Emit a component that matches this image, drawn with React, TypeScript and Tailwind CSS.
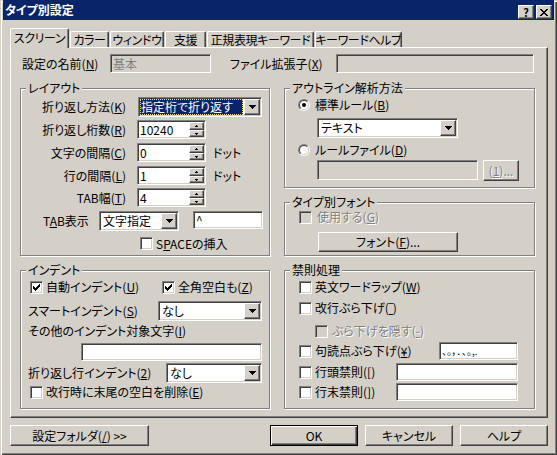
import type { ReactNode } from 'react';

const sunken =
  'border border-t-[#808080] border-l-[#808080] border-b-white border-r-white shadow-[inset_1px_1px_0_#404040,inset_-1px_-1px_0_#d4d0c8]';
const raised =
  'border border-t-white border-l-white border-b-[#404040] border-r-[#404040] shadow-[inset_-1px_-1px_0_#808080]';
const etched = 'border border-[#808080] shadow-[inset_1px_1px_0_#fff,1px_1px_0_#fff]';
const dim = 'text-[#808080] [text-shadow:1px_1px_0_#fff]';

const CHECK = ['......#', '.....##', '#...###', '##.###.', '#####..', '.###...', '..#....'];
const CLOSE = ['##....##', '.##..##.', '..####..', '...##...', '..####..', '.##..##.', '##....##'];
const ARROW = ['#######', '.#####.', '..###..', '...#...'];
const UP = ['.#.', '###'];
const DOWN = ['###', '.#.'];

function Pixels({ rows, color = '#000' }: { rows: string[]; color?: string }) {
  return (
    <svg width={rows[0].length} height={rows.length} shapeRendering="crispEdges" className="block">
      {rows.flatMap((r, y) =>
        r.split('').map((c, x) =>
          c === '#' ? <rect key={`${x}-${y}`} x={x} y={y} width={1} height={1} fill={color} /> : null,
        ),
      )}
    </svg>
  );
}

function Check({ checked, disabled }: { checked?: boolean; disabled?: boolean }) {
  return (
    <div
      className={`${sunken} flex h-[13px] w-[13px] shrink-0 items-center justify-center ${
        disabled ? 'bg-[#d4d0c8]' : 'bg-white'
      }`}
    >
      {checked && <Pixels rows={CHECK} />}
    </div>
  );
}

function Radio({ checked }: { checked?: boolean }) {
  return (
    <div className="flex h-[12px] w-[12px] shrink-0 items-center justify-center rounded-full border border-[#808080] border-b-white border-r-white">
      <div className="flex h-[10px] w-[10px] items-center justify-center rounded-full border border-[#404040] border-b-[#d4d0c8] border-r-[#d4d0c8] bg-white">
        {checked && <div className="h-[4px] w-[4px] rounded-full bg-black" />}
      </div>
    </div>
  );
}

function Combo({ className, children }: { className: string; children: ReactNode }) {
  return (
    <div className={`${sunken} flex shrink-0 bg-white p-[1px] ${className}`}>
      <div className="flex min-w-0 flex-1 items-center">{children}</div>
      <div className={`${raised} flex w-[16px] shrink-0 items-center justify-center bg-[#d4d0c8]`}>
        <Pixels rows={ARROW} />
      </div>
    </div>
  );
}

function Spin({ value }: { value: string }) {
  return (
    <div className={`${sunken} flex h-[19px] w-[69px] shrink-0 bg-white p-[1px]`}>
      <div className="flex flex-1 items-center pl-[1px]">{value}</div>
      <div className="flex w-[15px] flex-col">
        <div className={`${raised} flex h-[8px] items-center justify-center bg-[#d4d0c8]`}>
          <Pixels rows={UP} />
        </div>
        <div className={`${raised} flex flex-1 items-center justify-center bg-[#d4d0c8]`}>
          <Pixels rows={DOWN} />
        </div>
      </div>
    </div>
  );
}

function Edit({ className, children }: { className: string; children?: ReactNode }) {
  return (
    <div className={`${sunken} flex shrink-0 items-center overflow-hidden p-[1px] pl-[2px] ${className}`}>
      {children}
    </div>
  );
}

function Btn({ className, children }: { className: string; children: ReactNode }) {
  return (
    <div className={`${raised} flex shrink-0 items-center justify-center bg-[#d4d0c8] ${className}`}>{children}</div>
  );
}

function Group({ title, className, children }: { title: string; className: string; children: ReactNode }) {
  return (
    <div className={`${etched} flex shrink-0 flex-col ${className}`}>
      <div className="mb-[-6px] ml-[5px] -mt-[8px] h-[14px] w-fit bg-[#d4d0c8] px-[2px]">{title}</div>
      {children}
    </div>
  );
}

function Tab({ label, active, className }: { label: string; active?: boolean; className: string }) {
  return (
    <div
      className={`flex shrink-0 items-center justify-center overflow-hidden rounded-t-[2px] border-l border-r border-t border-l-white border-r-[#404040] border-t-white bg-[#d4d0c8] tracking-[-0.4px] shadow-[inset_-1px_0_0_#808080] ${
        active ? 'relative z-10 mb-[-1px] h-[20px] pb-[2px]' : 'h-[16px]'
      } ${className}`}
    >
      {label}
    </div>
  );
}

export default function App() {
  return (
    <div className="flex h-[455px] w-[557px] flex-col whitespace-nowrap bg-[#d4d0c8] px-[3px] font-['Noto_Sans_CJK_JP',sans-serif] text-[12px] leading-[14px] text-black shadow-[inset_1px_1px_0_#d4d0c8,inset_2px_2px_0_#fff,inset_-1px_-1px_0_#404040,inset_-2px_-2px_0_#808080] [font-feature-settings:'palt']">
      {/* title bar */}
      <div className="flex h-[20px] shrink-0 items-start bg-[#0a246a] pl-[2px] pr-[2px]">
        <div className="mt-[3px] flex-1 font-bold text-white">タイプ別設定</div>
        <Btn className="mt-[5px] h-[14px] w-[16px] text-[11px] font-bold leading-[12px]">?</Btn>
        <Btn className="ml-[2px] mt-[5px] h-[14px] w-[16px]">
          <Pixels rows={CLOSE} />
        </Btn>
      </div>

      {/* tabs */}
      <div className="ml-[7px] mt-[8px] flex h-[19px] shrink-0 items-end gap-[1px]">
        <Tab label="スクリーン" active className="w-[59px]" />
        <Tab label="カラー" className="w-[39px]" />
        <Tab label="ウィンドウ" className="w-[54px]" />
        <Tab label="支援" className="w-[41px]" />
        <Tab label="正規表現キーワード" className="w-[107px]" />
        <Tab label="キーワードヘルプ" className="w-[87px]" />
      </div>

      {/* tab panel */}
      <div className="ml-[7px] flex h-[371px] w-[538px] shrink-0 flex-col border border-b-[#404040] border-l-white border-r-[#404040] border-t-white shadow-[inset_-1px_-1px_0_#808080]">
        <div className="mt-[6px] flex h-[19px] items-center pl-[11px]">
          <div className="w-[88px] shrink-0">
            設定の名前(<u>N</u>)
          </div>
          <Edit className="h-[19px] w-[101px] bg-[#d4d0c8] text-[#808080]">基本</Edit>
          <div className="ml-[19px] w-[106px] shrink-0">
            ファイル拡張子(<u>X</u>)
          </div>
          <Edit className="h-[19px] w-[198px] bg-[#d4d0c8]" />
        </div>

        <div className="mt-[15px] flex gap-[14px] pl-[9px]">
          {/* left column */}
          <div className="flex flex-col gap-[14px]">
            <Group title="レイアウト" className="h-[168px] w-[250px]">
              <div className="mt-[8px] flex h-[20px] items-center">
                <div className="w-[105px] shrink-0 text-right">
                  折り返し方法(<u>K</u>)
                </div>
                <Combo className="ml-[12px] h-[20px] w-[124px]">
                  <div className="mr-[1px] flex h-full flex-1 items-center border border-dotted border-[#f5db95] bg-[#0a246a] text-white">
                    指定桁で折り返す
                  </div>
                </Combo>
              </div>
              <div className="mt-[3px] flex h-[19px] items-center">
                <div className="w-[105px] shrink-0 text-right">
                  折り返し桁数(<u>R</u>)
                </div>
                <div className="ml-[11px]">
                  <Spin value="10240" />
                </div>
              </div>
              <div className="mt-[4px] flex h-[19px] items-center">
                <div className="w-[105px] shrink-0 text-right">
                  文字の間隔(<u>C</u>)
                </div>
                <div className="ml-[11px]">
                  <Spin value="0" />
                </div>
                <div className="ml-[7px]">ドット</div>
              </div>
              <div className="mt-[4px] flex h-[19px] items-center">
                <div className="w-[105px] shrink-0 text-right">
                  行の間隔(<u>L</u>)
                </div>
                <div className="ml-[11px]">
                  <Spin value="1" />
                </div>
                <div className="ml-[7px]">ドット</div>
              </div>
              <div className="mt-[3px] flex h-[19px] items-center">
                <div className="w-[105px] shrink-0 text-right">
                  TAB幅(<u>T</u>)
                </div>
                <div className="ml-[11px]">
                  <Spin value="4" />
                </div>
              </div>
              <div className="mt-[4px] flex h-[20px] items-center pl-[22px]">
                <div className="w-[56px] shrink-0">
                  T<u>A</u>B表示
                </div>
                <Combo className="h-[20px] w-[80px]">
                  <span className="pl-[2px]">文字指定</span>
                </Combo>
                <Edit className="ml-[14px] h-[18px] w-[70px] self-start bg-white">^</Edit>
              </div>
              <div className="mt-[6px] flex h-[13px] items-center pl-[119px]">
                <Check />
                <div className="ml-[3px]">
                  S<u>P</u>ACEの挿入
                </div>
              </div>
            </Group>

            <Group title="インデント" className="h-[139px] w-[250px]">
              <div className="mt-[9px] flex h-[14px] items-center pl-[9px]">
                <div className="flex w-[132px] shrink-0 items-center">
                  <Check checked />
                  <div className="ml-[3px]">
                    自動インデント(<u>U</u>)
                  </div>
                </div>
                <Check checked />
                <div className="ml-[3px]">
                  全角空白も(<u>Z</u>)
                </div>
              </div>
              <div className="mt-[7px] flex h-[20px] items-center pl-[7px]">
                <div className="w-[130px] shrink-0">
                  スマートインデント(<u>S</u>)
                </div>
                <Combo className="h-[20px] w-[104px]">
                  <span className="pl-[2px]">なし</span>
                </Combo>
              </div>
              <div className="mt-[3px] flex h-[14px] items-center pl-[7px]">
                その他のインデント対象文字(<u>I</u>)
              </div>
              <Edit className="ml-[60px] mt-[5px] h-[18px] w-[181px] bg-white" />
              <div className="mt-[2px] flex h-[20px] items-center pl-[7px]">
                <div className="w-[138px] shrink-0">
                  折り返し行インデント(<u>2</u>)
                </div>
                <Combo className="h-[20px] w-[96px]">
                  <span className="pl-[2px]">なし</span>
                </Combo>
              </div>
              <div className="mt-[2px] flex h-[14px] items-center pl-[9px]">
                <Check />
                <div className="ml-[3px]">
                  改行時に末尾の空白を削除(<u>E</u>)
                </div>
              </div>
            </Group>
          </div>

          {/* right column */}
          <div className="flex flex-col gap-[14px]">
            <Group title="アウトライン解析方法" className="h-[100px] w-[251px]">
              <div className="mt-[9px] flex h-[14px] items-center pl-[13px]">
                <Radio checked />
                <div className="ml-[5px]">
                  標準ルール(<u>B</u>)
                </div>
              </div>
              <Combo className="ml-[32px] mt-[6px] h-[20px] w-[141px]">
                <span className="pl-[2px]">テキスト</span>
              </Combo>
              <div className="mt-[5px] flex h-[14px] items-center pl-[13px]">
                <Radio />
                <div className="ml-[5px]">
                  ルールファイル(<u>D</u>)
                </div>
              </div>
              <div className="mt-[3px] flex items-start pl-[32px]">
                <Edit className="h-[20px] w-[161px] bg-[#d4d0c8]" />
                <Btn className={`ml-[5px] h-[21px] w-[36px] ${dim}`}>
                  (<u>1</u>)...
                </Btn>
              </div>
            </Group>

            <Group title="タイプ別フォント" className="h-[54px] w-[251px]">
              <div className="mt-[7px] flex h-[14px] items-center pl-[14px]">
                <Check disabled />
                <div className={`ml-[5px] ${dim}`}>
                  使用する(<u>G</u>)
                </div>
              </div>
              <Btn className="ml-[33px] mt-[8px] h-[20px] w-[140px]">
                フォント(<u>F</u>)...
              </Btn>
            </Group>

            <Group title="禁則処理" className="h-[139px] w-[251px]">
              <div className="mt-[9px] flex h-[14px] items-center pl-[14px]">
                <Check />
                <div className="ml-[3px]">
                  英文ワードラップ(<u>W</u>)
                </div>
              </div>
              <div className="mt-[7px] flex h-[14px] items-center pl-[14px]">
                <Check />
                <div className="ml-[3px]">
                  改行ぶら下げ(<u>‾</u>)
                </div>
              </div>
              <div className="mt-[9px] flex h-[14px] items-center pl-[30px]">
                <Check disabled />
                <div className={`ml-[4px] ${dim}`}>
                  ぶら下げを隠す(<u>-</u>)
                </div>
              </div>
              <div className="mt-[4px] flex h-[18px] items-center pl-[14px]">
                <div className="flex w-[140px] shrink-0 items-center">
                  <Check />
                  <div className="ml-[3px]">
                    句読点ぶら下げ(<u>¥</u>)
                  </div>
                </div>
                <Edit className="h-[18px] w-[79px] bg-white text-[10px]">、。，．､｡,.</Edit>
              </div>
              <div className="mt-[3px] flex h-[18px] items-center pl-[14px]">
                <div className="flex w-[97px] shrink-0 items-center">
                  <Check />
                  <div className="ml-[3px]">
                    行頭禁則(<u>[</u>)
                  </div>
                </div>
                <Edit className="h-[18px] w-[122px] bg-white" />
              </div>
              <div className="mt-[2px] flex h-[18px] items-center pl-[14px]">
                <div className="flex w-[97px] shrink-0 items-center">
                  <Check />
                  <div className="ml-[3px]">
                    行末禁則(<u>]</u>)
                  </div>
                </div>
                <Edit className="h-[18px] w-[122px] bg-white" />
              </div>
            </Group>
          </div>
        </div>
      </div>

      {/* bottom buttons */}
      <div className="ml-[7px] mt-[7px] flex h-[21px] shrink-0">
        <Btn className="h-[21px] w-[139px]">
          設定フォルダ(<u>/</u>) &gt;&gt;
        </Btn>
        <div className="ml-[121px] flex h-[21px] w-[88px] shrink-0 border border-black">
          <div className="flex flex-1 items-center justify-center shadow-[inset_1px_1px_0_#fff,inset_-1px_-1px_0_#404040,inset_-2px_-2px_0_#808080]">
            OK
          </div>
        </div>
        <Btn className="ml-[7px] h-[21px] w-[88px]">キャンセル</Btn>
        <Btn className="ml-[7px] h-[21px] w-[88px]">ヘルプ</Btn>
      </div>
    </div>
  );
}
